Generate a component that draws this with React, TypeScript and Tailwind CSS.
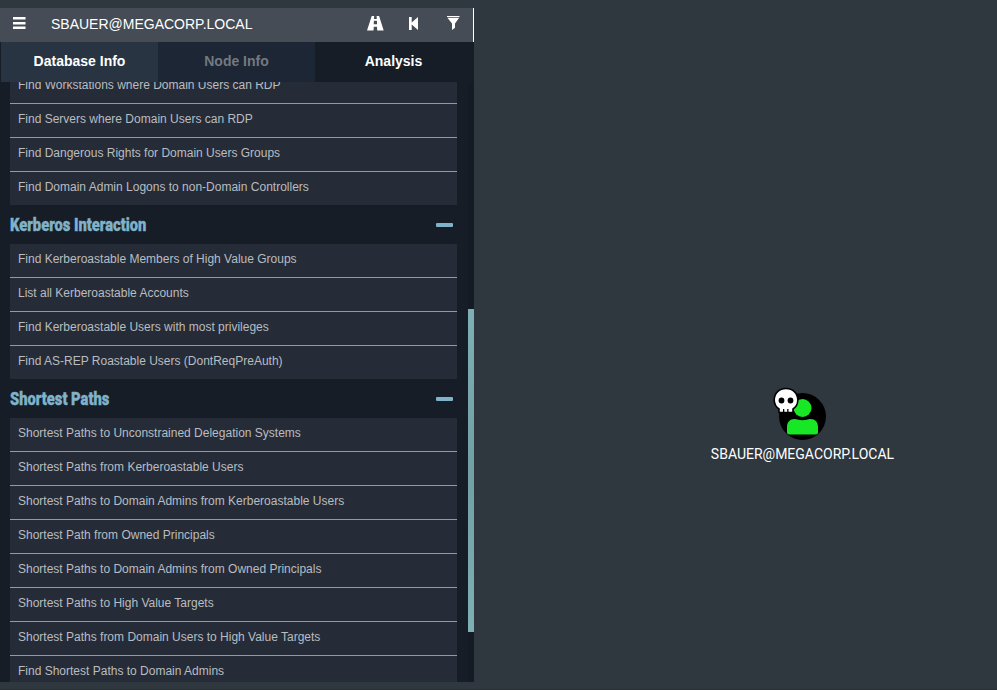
type QueryGroup = { title?: string; items: string[] };

const groups: QueryGroup[] = [
  {
    items: [
      'Find Workstations where Domain Users can RDP',
      'Find Servers where Domain Users can RDP',
      'Find Dangerous Rights for Domain Users Groups',
      'Find Domain Admin Logons to non-Domain Controllers',
    ],
  },
  {
    title: 'Kerberos Interaction',
    items: [
      'Find Kerberoastable Members of High Value Groups',
      'List all Kerberoastable Accounts',
      'Find Kerberoastable Users with most privileges',
      'Find AS-REP Roastable Users (DontReqPreAuth)',
    ],
  },
  {
    title: 'Shortest Paths',
    items: [
      'Shortest Paths to Unconstrained Delegation Systems',
      'Shortest Paths from Kerberoastable Users',
      'Shortest Paths to Domain Admins from Kerberoastable Users',
      'Shortest Path from Owned Principals',
      'Shortest Paths to Domain Admins from Owned Principals',
      'Shortest Paths to High Value Targets',
      'Shortest Paths from Domain Users to High Value Targets',
      'Find Shortest Paths to Domain Admins',
    ],
  },
];

function SearchBar() {
  return (
    <div className="flex h-[34px] w-[474px] items-center border-r border-white bg-[#454c56] text-white">
      <div className="flex h-full w-[39px] items-center pl-[13px]">
        <svg width="13" height="12" viewBox="0 0 13 12" fill="currentColor" className="-mt-[4px]">
          <path d="M0 0h12.5v2.5H0zM0 4.9h12.5v2.5H0zM0 9.6h12.5v2.4H0z" />
        </svg>
      </div>
      <div className="flex-1 whitespace-nowrap pb-[2px] pl-[12px] text-[14px] leading-5">SBAUER@MEGACORP.LOCAL</div>
      <svg width="17" height="15" viewBox="0 0 17 15" fill="currentColor" className="mr-[25px] -mt-[3px]">
        <path d="M4.7 0H7.2L7 3h2.8L9.6 0h2.5L16.7 14.500H10.2L10 10.700H6.8L6.5 14.500H0zM6.9 4.8 6.7 8.3h3.4L9.9 4.8z" />
      </svg>
      <svg width="10" height="13" viewBox="0 0 10 13" fill="currentColor" className="mr-[28px] -mt-[3px]">
        <path d="M0 0h2.7v5.5L9 0v13L2.7 7.4V13H0z" />
      </svg>
      <svg width="13" height="14" viewBox="0 0 13 14" fill="currentColor" className="mr-[13px] -mt-[4px]">
        <path d="M0 0h12.5v1H0zM.4 1.8h11.8L8 7.6v4.2L5 14V7.6z" />
      </svg>
    </div>
  );
}

function Tabs() {
  return (
    <div className="flex h-10 shrink-0 bg-[#161d27] pl-px text-[14px] font-bold">
      <div className="flex w-[157px] items-center justify-center bg-[#293443] pb-[2px] text-white">Database Info</div>
      <div className="flex w-[157px] items-center justify-center bg-[#1c2634] pb-[2px] text-[#747981]">Node Info</div>
      <div className="flex w-[157px] items-center justify-center bg-[#161d27] pb-[2px] text-white">Analysis</div>
    </div>
  );
}

function Group({ title, items }: QueryGroup) {
  return (
    <section>
      {title && (
        <div className="flex h-[39px] items-center justify-between pr-[4px]">
          <h4 className="origin-left scale-x-[0.775] whitespace-nowrap font-['Roboto',sans-serif] text-[19px] font-black leading-5 text-[#80b2c9] [-webkit-text-stroke:0.4px_#80b2c9]">
            {title}
          </h4>
          <span className="h-[4px] w-[17px] rounded-[1px] bg-[#80b2c9]" />
        </div>
      )}
      <ul>
        {items.map((item) => (
          <li
            key={item}
            className="h-[34px] whitespace-nowrap border-b border-[#969aa0] bg-[#262c37] px-2 pt-[6px] text-[12px] leading-[18px] text-[#b9bcc0] last:h-[33px] last:border-b-0"
          >
            {item}
          </li>
        ))}
      </ul>
    </section>
  );
}

function UserNode() {
  return (
    <div className="absolute left-[702px] top-[386px] flex w-[201px] flex-col items-center">
      <svg width="60" height="56" viewBox="0 0 60 56" className="-ml-[5px]">
        <circle cx="32.500" cy="30.5" r="23.5" fill="#000" />
        <circle cx="32.500" cy="22" r="9" fill="#17e725" />
        <path
          d="M17 41C17 36 20 33 24.500 33C27.500 33 29 34.300 32.500 34.300S37.500 33 40.500 33C45 33 48 36 48 41V46Q48 48.500 45.500 48.500H19.500Q17 48.500 17 46z"
          fill="#17e725"
        />
        <path
          d="M16 2.500C8.800 2.500 4.200 7.500 4.200 14c0 4 2 7 4.800 9v3.500h14V23c3-2 4.800-5 4.800-9C27.800 7.500 23.200 2.500 16 2.500z"
          fill="#fff"
          stroke="#000"
          strokeWidth="1.600"
        />
        <circle cx="11.500" cy="14.500" r="2.900" />
        <circle cx="20.500" cy="14.500" r="2.900" />
        <path d="M13 23h1.300v3.500H13zM17.200 23h1.300v3.500h-1.300z" />
      </svg>
      <span className="mt-[2px] whitespace-nowrap font-['Roboto',sans-serif] text-[14px] leading-5 text-white">
        SBAUER@MEGACORP.LOCAL
      </span>
    </div>
  );
}

export default function App() {
  return (
    <main className="relative h-[690px] w-[997px] overflow-hidden border-b border-[#302d35] bg-[#2f373f] pt-2 font-['Liberation_Sans',Arial,sans-serif]">
      <SearchBar />
      <aside className="flex h-[640px] w-[474px] flex-col bg-[#161d27]">
        <Tabs />
        <div className="flex h-[600px] overflow-hidden">
          <div className="-mt-3 ml-[10px] w-[447px] shrink-0">
            {groups.map((group) => (
              <Group key={group.items[0]} {...group} />
            ))}
          </div>
          <div className="ml-[11px] h-full w-[6px] bg-[#151b25] pt-[227px]">
            <div className="h-[323px] bg-linear-to-b from-[#7eb0b6] via-[#719fa5] to-[#7eb0b6]" />
          </div>
        </div>
      </aside>
      <UserNode />
    </main>
  );
}
